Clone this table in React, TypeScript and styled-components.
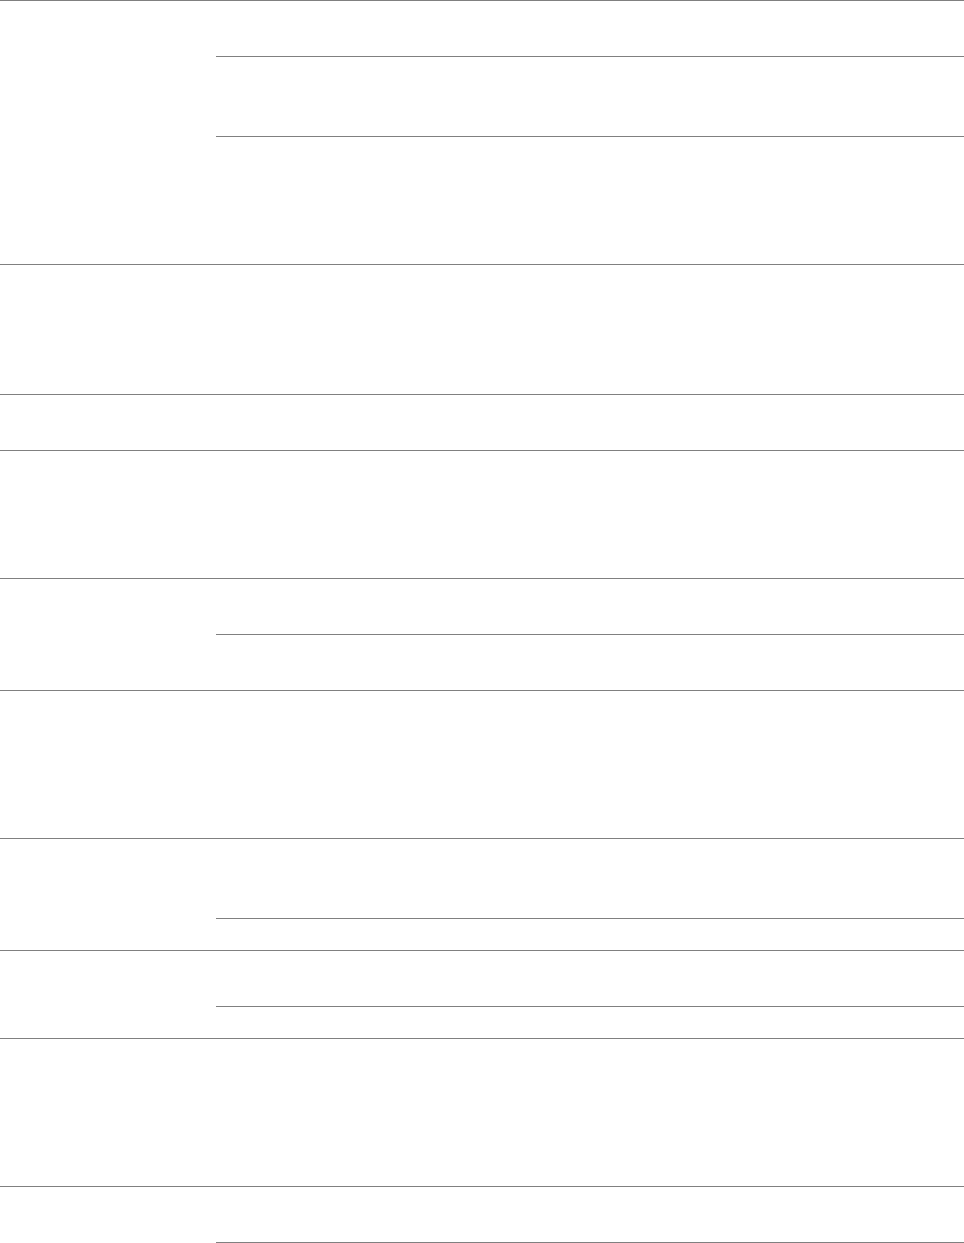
import React from "react";
import styled, { createGlobalStyle } from "styled-components";

const GlobalStyle = createGlobalStyle`
  html, body {
    margin: 0;
    padding: 0;
    background: #ffffff;
    font-family: "Liberation Sans", Arial, sans-serif;
    color: #ffffff;
  }
`;

const Page = styled.div`
  display: flex;
  flex-direction: column;
  width: 100%;
`;

const Group = styled.section`
  display: grid;
  grid-template-columns: 216px 1fr;
  border-top: 1px solid #808080;
`;

const Label = styled.div`
  font-size: 14px;
`;

const Entries = styled.div`
  display: flex;
  flex-direction: column;
`;

const Entry = styled.div<{ $h: number }>`
  height: ${(p) => p.$h}px;
  & + & {
    border-top: 1px solid #808080;
  }
  font-size: 14px;
`;

const groups: number[][] = [
  [55, 79, 127],
  [129],
  [55],
  [127],
  [55, 55],
  [147],
  [79, 31],
  [55, 31],
  [147],
  [55, 55],
];

export default function App() {
  return (
    <>
      <GlobalStyle />
      <Page>
        {groups.map((rows, gi) => (
          <Group key={gi}>
            <Label />
            <Entries>
              {rows.map((h, ri) => (
                <Entry key={ri} $h={h} />
              ))}
            </Entries>
          </Group>
        ))}
      </Page>
    </>
  );
}
